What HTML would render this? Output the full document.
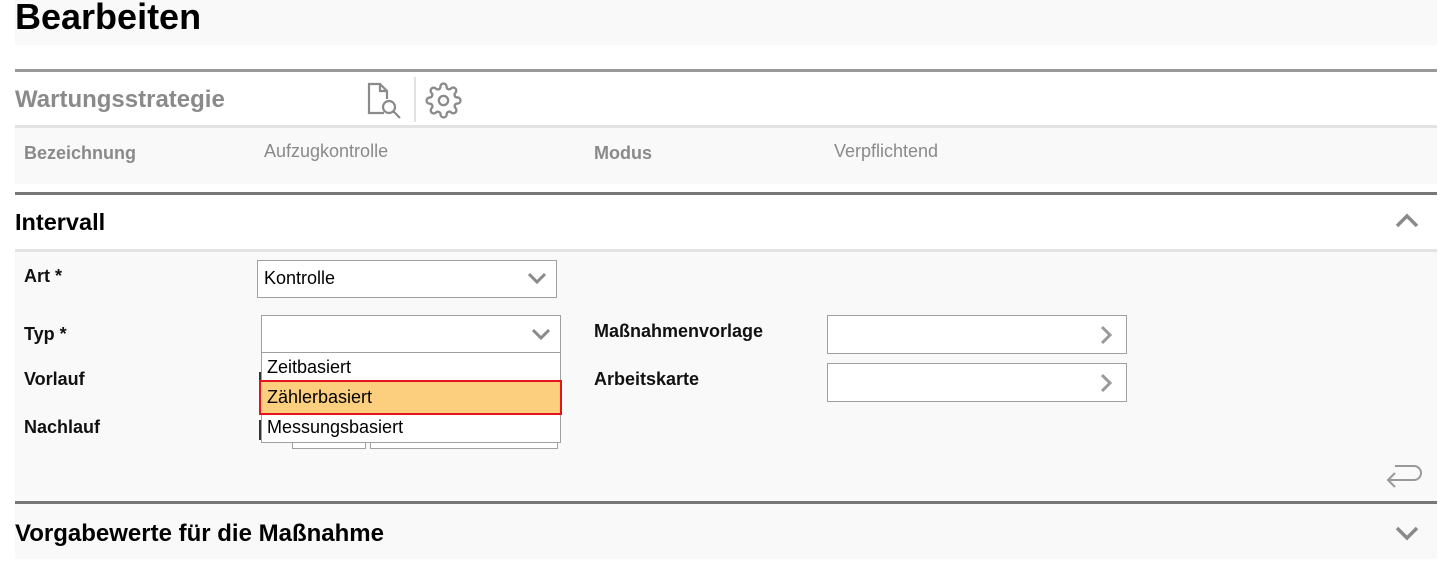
<!DOCTYPE html>
<html><head><meta charset="utf-8"><style>
*{margin:0;padding:0;box-sizing:border-box}
body{width:1451px;height:562px;background:#fff;font-family:"Liberation Sans",Arial,sans-serif;position:relative;overflow:hidden}
.a{position:absolute}
.lbl{position:absolute;font-size:18px;font-weight:bold;color:#111}
.box{position:absolute;background:#fff;border:1px solid #a0a0a0}
.g{color:#8a8a8a}
</style></head><body>
<div class="a" style="left:15px;top:0;width:1422px;height:45px;background:#f9f9f9"></div>
<div class="a" style="left:15px;top:-4px;font-size:36px;font-weight:bold;color:#000">Bearbeiten</div>

<div class="a" style="left:15px;top:69px;width:1422px;height:3px;background:#999"></div>
<div class="a g" style="left:15px;top:86px;font-size:24px;font-weight:bold">Wartungsstrategie</div>
<svg class="a" style="left:366px;top:82px" width="38" height="38" viewBox="0 0 38 38" fill="none" stroke="#8a8a8a" stroke-width="2.2">
<path d="M18 31H3V2h11l7 7v8"/><path d="M14 2v7h7"/><circle cx="23" cy="25" r="6"/><path d="M27.5 29.5L34 36"/></svg>
<div class="a" style="left:414px;top:77px;width:2px;height:45px;background:#e2e2e2"></div>
<svg class="a" style="left:425px;top:82px" width="37" height="37" viewBox="0 0 24 24" fill="none" stroke="#8a8a8a" stroke-width="1.5"><circle cx="12" cy="12" r="3"/><path d="M19.4 15a1.65 1.65 0 0 0 .33 1.82l.06.06a2 2 0 0 1 0 2.83 2 2 0 0 1-2.83 0l-.06-.06a1.65 1.65 0 0 0-1.82-.33 1.65 1.65 0 0 0-1 1.51V21a2 2 0 0 1-2 2 2 2 0 0 1-2-2v-.09A1.65 1.65 0 0 0 9 19.4a1.65 1.65 0 0 0-1.82.33l-.06.06a2 2 0 0 1-2.83 0 2 2 0 0 1 0-2.83l.06-.06a1.65 1.65 0 0 0 .33-1.82 1.65 1.65 0 0 0-1.51-1H3a2 2 0 0 1-2-2 2 2 0 0 1 2-2h.09A1.65 1.65 0 0 0 4.6 9a1.65 1.65 0 0 0-.33-1.82l-.06-.06a2 2 0 0 1 0-2.83 2 2 0 0 1 2.83 0l.06.06a1.65 1.65 0 0 0 1.82.33H9a1.65 1.65 0 0 0 1-1.51V3a2 2 0 0 1 2-2 2 2 0 0 1 2 2v.09a1.65 1.65 0 0 0 1 1.51 1.65 1.65 0 0 0 1.82-.33l.06-.06a2 2 0 0 1 2.83 0 2 2 0 0 1 0 2.83l-.06.06a1.65 1.65 0 0 0-.33 1.82V9a1.65 1.65 0 0 0 1.51 1H21a2 2 0 0 1 2 2 2 2 0 0 1-2 2h-.09a1.65 1.65 0 0 0-1.51 1z"/></svg>

<div class="a" style="left:15px;top:125px;width:1422px;height:3px;background:#e3e3e3"></div>
<div class="a" style="left:15px;top:128px;width:1422px;height:56px;background:#f9f9f9"></div>
<div class="a g" style="left:24px;top:143px;font-size:18px;font-weight:bold">Bezeichnung</div>
<div class="a g" style="left:264px;top:141px;font-size:18px">Aufzugkontrolle</div>
<div class="a g" style="left:594px;top:143px;font-size:18px;font-weight:bold">Modus</div>
<div class="a g" style="left:834px;top:141px;font-size:18px">Verpflichtend</div>

<div class="a" style="left:15px;top:192px;width:1422px;height:3px;background:#777"></div>
<div class="a" style="left:15px;top:209px;font-size:23.5px;font-weight:bold;color:#000">Intervall</div>
<svg class="a" style="left:1395px;top:213px" width="24" height="16" viewBox="0 0 24 16" fill="none" stroke="#8a8a8a" stroke-width="3.5"><path d="M2 13L12 3l10 10"/></svg>
<div class="a" style="left:15px;top:249px;width:1422px;height:3px;background:#e3e3e3"></div>
<div class="a" style="left:15px;top:252px;width:1422px;height:249px;background:#f9f9f9"></div>

<div class="lbl" style="left:24px;top:266px">Art *</div>
<div class="lbl" style="left:24px;top:324px">Typ *</div>
<div class="lbl" style="left:24px;top:369px">Vorlauf</div>
<div class="lbl" style="left:24px;top:417px">Nachlauf</div>
<div class="lbl" style="left:594px;top:321px">Maßnahmenvorlage</div>
<div class="lbl" style="left:594px;top:369px">Arbeitskarte</div>

<div class="box" style="left:257px;top:260px;width:300px;height:38px"><span class="a" style="left:6px;top:7px;font-size:18px">Kontrolle</span></div>
<svg class="a" style="left:527px;top:271px" width="20" height="14" viewBox="0 0 20 14" fill="none" stroke="#8a8a8a" stroke-width="3"><path d="M2 3l8 8 8-8"/></svg>

<div class="box" style="left:292px;top:420px;width:74px;height:29px"></div>
<div class="box" style="left:370px;top:420px;width:188px;height:29px"></div>
<div class="a" style="left:259px;top:372px;width:2px;height:20px;background:#333"></div>
<div class="a" style="left:259px;top:420px;width:2px;height:20px;background:#333"></div>

<div class="box" style="left:261px;top:315px;width:300px;height:38px"></div>
<svg class="a" style="left:531px;top:327px" width="20" height="14" viewBox="0 0 20 14" fill="none" stroke="#8a8a8a" stroke-width="3"><path d="M2 3l8 8 8-8"/></svg>
<div class="box" style="left:261px;top:352px;width:300px;height:91px"></div>
<div class="a" style="left:267px;top:357px;font-size:18px">Zeitbasiert</div>
<div class="a" style="left:259px;top:380px;width:303px;height:35px;background:#fbcf7e;border:2px solid #e4141c"></div>
<div class="a" style="left:267px;top:387px;font-size:18px">Zählerbasiert</div>
<div class="a" style="left:267px;top:417px;font-size:18px">Messungsbasiert</div>

<div class="box" style="left:827px;top:315px;width:300px;height:39px"></div>
<svg class="a" style="left:1099px;top:325px" width="14" height="20" viewBox="0 0 14 20" fill="none" stroke="#999" stroke-width="3"><path d="M3 2l8 8-8 8"/></svg>
<div class="box" style="left:827px;top:363px;width:300px;height:39px"></div>
<svg class="a" style="left:1099px;top:373px" width="14" height="20" viewBox="0 0 14 20" fill="none" stroke="#999" stroke-width="3"><path d="M3 2l8 8-8 8"/></svg>

<svg class="a" style="left:1385px;top:462px" width="38" height="30" viewBox="0 0 38 30" fill="none" stroke="#999" stroke-width="2"><path d="M10 4h19a7 7 0 0 1 0 14H3"/><path d="M10 11l-7 7 7 7"/></svg>

<div class="a" style="left:15px;top:501px;width:1422px;height:3px;background:#777"></div>
<div class="a" style="left:15px;top:504px;width:1422px;height:55px;background:#f9f9f9"></div>
<div class="a" style="left:15px;top:520px;font-size:24px;font-weight:bold;color:#000">Vorgabewerte für die Maßnahme</div>
<svg class="a" style="left:1395px;top:525px" width="24" height="16" viewBox="0 0 24 16" fill="none" stroke="#8a8a8a" stroke-width="3.5"><path d="M2 3l10 10 10-10"/></svg>
</body></html>
